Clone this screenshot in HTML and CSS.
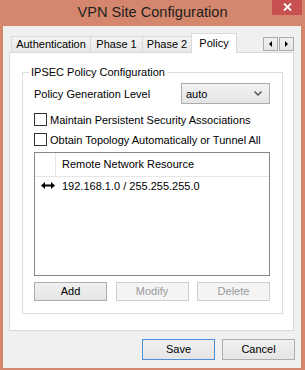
FILE: index.html
```html
<!DOCTYPE html>
<html>
<head>
<meta charset="utf-8">
<link rel="stylesheet" href="styles.css">
</head>
<body>
<div class="window">
  <div class="titlebar">
    <span></span>
    <span class="title">VPN Site Configuration</span>
    <div class="close">
      <svg width="9" height="8" viewBox="0 0 9 8"><path d="M1 0.5 L8 7.5 M8 0.5 L1 7.5" stroke="#fff" stroke-width="1.8"/></svg>
    </div>
  </div>
  <div class="client">
    <div class="tabstrip">
      <div class="tabs">
        <div class="tab t-auth">Authentication</div>
        <div class="tab t-p1">Phase 1</div>
        <div class="tab t-p2">Phase 2</div>
        <div class="tab t-pol active">Policy</div>
      </div>
      <div class="scroll">
        <div class="sbtn"><span class="tri left"></span></div>
        <div class="sbtn"><span class="tri right"></span></div>
      </div>
    </div>
    <div class="panel">
      <fieldset class="group">
        <legend>IPSEC Policy Configuration</legend>
        <div class="row">
          <span>Policy Generation Level</span>
          <div class="select">
            <span>auto</span>
            <svg width="8" height="5" viewBox="0 0 8 5"><path d="M0.5 0.5 L4 4 L7.5 0.5" fill="none" stroke="#555" stroke-width="1.5"/></svg>
          </div>
        </div>
        <div class="check first"><span class="box"></span><span>Maintain Persistent Security Associations</span></div>
        <div class="check"><span class="box"></span><span>Obtain Topology Automatically or Tunnel All</span></div>
        <div class="list">
          <div class="lhead">
            <div class="c0"></div>
            <div class="c1">Remote Network Resource</div>
          </div>
          <div class="lrow">
            <div class="c0">
              <svg width="14" height="7" viewBox="0 0 14 7"><path d="M0 3.5 L4 0 L4 2.5 L10 2.5 L10 0 L14 3.5 L10 7 L10 4.5 L4 4.5 L4 7 Z" fill="#000"/></svg>
            </div>
            <div class="c1">192.168.1.0 / 255.255.255.0</div>
          </div>
        </div>
        <div class="btns">
          <div class="btn">Add</div>
          <div class="btn disabled">Modify</div>
          <div class="btn disabled">Delete</div>
        </div>
      </fieldset>
    </div>
    <div class="footer">
      <div class="btn big default">Save</div>
      <div class="btn big">Cancel</div>
    </div>
  </div>
</div>
</body>
</html>
```
FILE: styles.css
```css
html, body {
  margin: 0;
  padding: 0;
}
body {
  font-family: "Liberation Sans", Arial, sans-serif;
  font-size: 11px;
  color: #000;
}
.window {
  width: 305px;
  height: 370px;
  background: #d4876c;
  display: flex;
  flex-direction: column;
}
.titlebar {
  flex: none;
  height: 26px;
  display: grid;
  grid-template-columns: 1fr auto 1fr;
  align-items: start;
}
.title {
  font-size: 14.6px;
  line-height: 24px;
  color: #1e1e1e;
  white-space: nowrap;
}
.close {
  justify-self: end;
  width: 30px;
  height: 15px;
  margin-right: 3px;
  background: #c75050;
  display: flex;
  align-items: center;
  justify-content: center;
  padding-bottom: 2px;
  box-sizing: border-box;
}
.client {
  flex: 1;
  margin: 0 4px 2px 3px;
  background: #f0f0f0;
  padding: 7px 7px 8px 6px;
  display: flex;
  flex-direction: column;
}
.tabstrip {
  height: 19px;
  display: flex;
  justify-content: space-between;
  flex: none;
}
.tabs {
  display: flex;
  align-items: flex-end;
  margin-left: 2px;
}
.tab {
  height: 16px;
  box-sizing: border-box;
  border: 1px solid #d9d9d9;
  border-bottom: none;
  background: linear-gradient(#f3f3f3, #e8e8e8);
  line-height: 15px;
  text-align: center;
  margin-left: -1px;
  white-space: nowrap;
}
.t-auth { width: 80px; margin-left: 0; }
.t-p1 { width: 53px; }
.t-p2 { width: 50px; }
.t-pol { width: 46px; }
.tab.active {
  height: 20px;
  margin-bottom: -1px;
  background: #fff;
  line-height: 18px;
  position: relative;
  z-index: 1;
}
.scroll {
  display: flex;
  gap: 1px;
  margin-top: 4px;
}
.sbtn {
  width: 15px;
  height: 14px;
  box-sizing: border-box;
  border: 1px solid #acacac;
  background: linear-gradient(#f0f0f0, #e5e5e5);
  display: flex;
  align-items: center;
  justify-content: center;
}
.tri {
  width: 0;
  height: 0;
  border-top: 3px solid transparent;
  border-bottom: 3px solid transparent;
}
.tri.left { border-right: 3px solid #000; }
.tri.right { border-left: 3px solid #000; }
.panel {
  flex: none;
  height: 279px;
  box-sizing: border-box;
  border: 1px solid #d9d9d9;
  background: #fff;
  display: flex;
  flex-direction: column;
}
.group {
  margin: 13px 10px 0 12px;
  border: 1px solid #dcdcdc;
  padding: 4px 12px 12px 11px;
  min-width: 0;
}
.group legend {
  padding: 0 2px;
  margin-left: -5px;
  line-height: 13px;
}
.row {
  height: 21px;
  display: flex;
  justify-content: space-between;
  align-items: center;
}
.select {
  width: 89px;
  height: 21px;
  box-sizing: border-box;
  border: 1px solid #acacac;
  background: linear-gradient(#f2f2f2, #e5e5e5);
  display: flex;
  align-items: center;
  justify-content: space-between;
  padding: 0 7px 0 4px;
}
.check {
  display: flex;
  align-items: center;
  gap: 3px;
  height: 13px;
  margin-top: 7px;
  white-space: nowrap;
}
.check.first { margin-top: 9px; }
.box {
  width: 13px;
  height: 13px;
  box-sizing: border-box;
  border: 1px solid #333;
  background: #fff;
  flex: none;
}
.list {
  margin-top: 6px;
  height: 124px;
  box-sizing: border-box;
  border: 1px solid #828790;
  background: #fff;
}
.lhead {
  display: flex;
  height: 24px;
  box-sizing: border-box;
  border-bottom: 1px solid #e5e5e5;
  line-height: 23px;
}
.lhead .c0 {
  width: 21px;
  box-sizing: border-box;
  border-right: 1px solid #e5e5e5;
}
.c1 {
  padding-left: 6px;
  white-space: nowrap;
}
.lrow {
  display: flex;
  height: 17px;
  align-items: center;
}
.lrow .c0 {
  width: 21px;
  box-sizing: border-box;
  padding-left: 6px;
  display: flex;
  align-items: center;
}
.lrow .c1 { padding-left: 6px; }
.btns {
  margin-top: 6px;
  display: flex;
  justify-content: space-between;
}
.btn {
  width: 73px;
  height: 19px;
  box-sizing: border-box;
  border: 1px solid #adadad;
  background: linear-gradient(#f0f0f0, #e5e5e5);
  text-align: center;
  line-height: 17px;
}
.btn.disabled {
  border-color: #cfcfcf;
  background: #f4f4f4;
  color: #9a9a9a;
}
.footer {
  margin-top: 8px;
  margin-right: -1px;
  display: flex;
  justify-content: flex-end;
  gap: 7px;
}
.btn.big {
  height: 21px;
  line-height: 19px;
}
.btn.default {
  border-color: #4a90d9;
}
```
